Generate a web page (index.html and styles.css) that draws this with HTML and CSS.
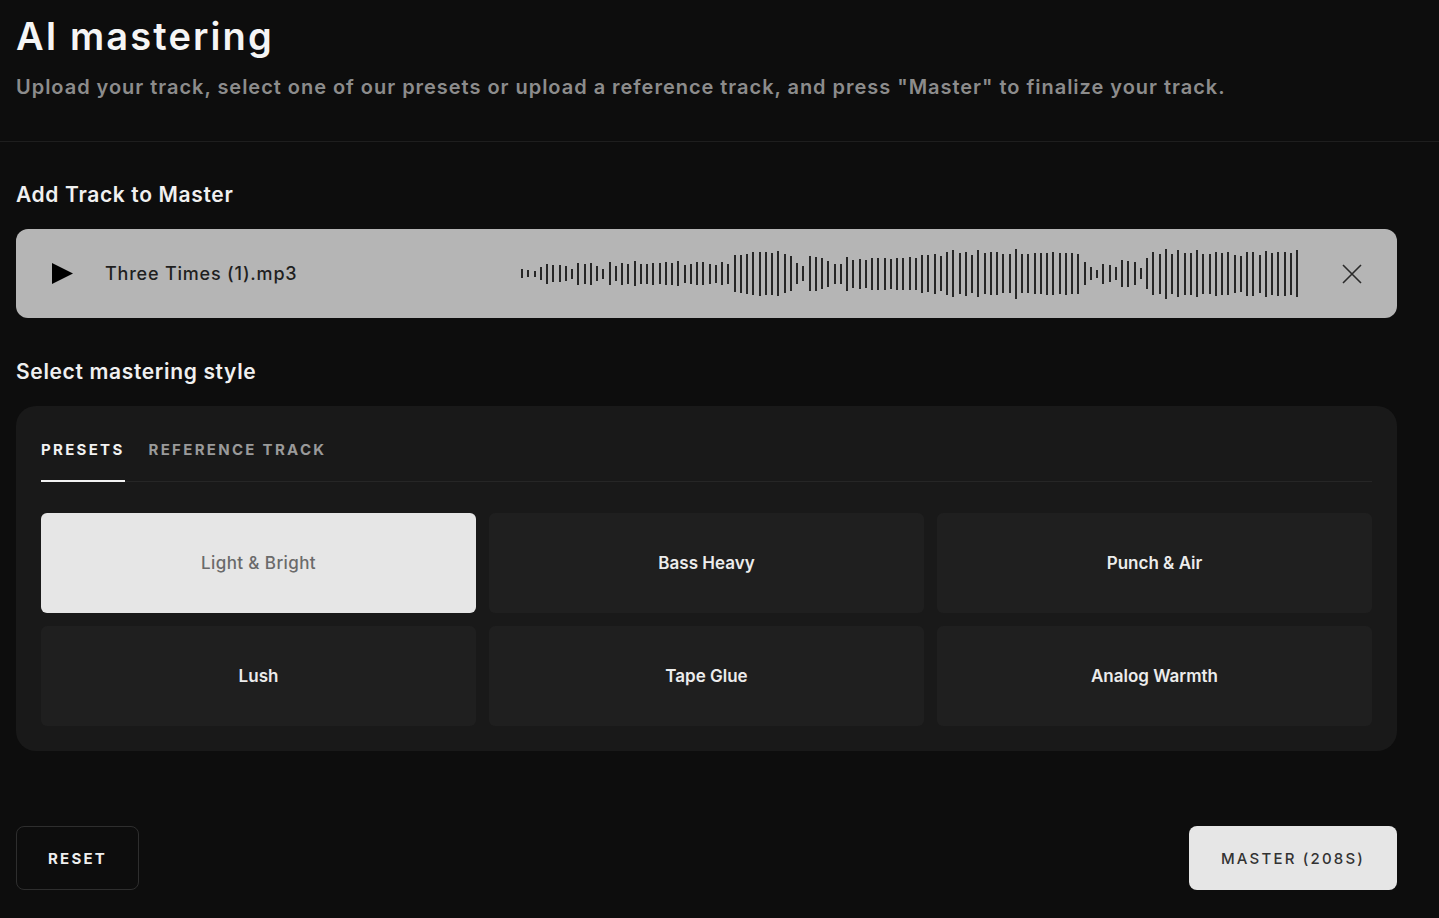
FILE: index.html
```html
<!DOCTYPE html>
<html lang="en">
<head>
<meta charset="utf-8">
<title>AI mastering</title>
<link rel="stylesheet" href="styles.css">
</head>
<body>
<header class="header">
  <h1 class="title">AI mastering</h1>
  <p class="subtitle">Upload your track, select one of our presets or upload a reference track, and press "Master" to finalize your track.</p>
</header>
<main class="main">
  <h2 class="section-title first">Add Track to Master</h2>
  <div class="track">
    <button class="play" aria-label="Play">
      <svg width="22" height="22" viewBox="0 0 22 22"><path d="M0 0 L21 10.5 L0 21 Z" fill="#000"/></svg>
    </button>
    <div class="filename">Three Times (1).mp3</div>
    <div class="wave">
      <span style="height:9px"></span><span style="height:7px"></span><span style="height:6px"></span><span style="height:13px"></span><span style="height:20px"></span><span style="height:17px"></span><span style="height:17px"></span><span style="height:15px"></span><span style="height:10px"></span><span style="height:22px"></span><span style="height:20px"></span><span style="height:22px"></span><span style="height:15px"></span><span style="height:10px"></span><span style="height:23px"></span><span style="height:15px"></span><span style="height:22px"></span><span style="height:20px"></span><span style="height:25px"></span><span style="height:20px"></span><span style="height:20px"></span><span style="height:22px"></span><span style="height:21px"></span><span style="height:23px"></span><span style="height:22px"></span><span style="height:25px"></span><span style="height:18px"></span><span style="height:20px"></span><span style="height:23px"></span><span style="height:23px"></span><span style="height:20px"></span><span style="height:18px"></span><span style="height:23px"></span><span style="height:20px"></span>
      <span style="height:37px"></span><span style="height:38px"></span><span style="height:40px"></span><span style="height:43px"></span><span style="height:44px"></span><span style="height:43px"></span><span style="height:42px"></span><span style="height:45px"></span><span style="height:39px"></span><span style="height:35px"></span><span style="height:21px"></span><span style="height:15px"></span><span style="height:35px"></span><span style="height:34px"></span><span style="height:31px"></span><span style="height:26px"></span>
      <span style="height:20px"></span><span style="height:20px"></span><span style="height:34px"></span><span style="height:28px"></span><span style="height:30px"></span><span style="height:28px"></span><span style="height:32px"></span><span style="height:32px"></span><span style="height:32px"></span><span style="height:30px"></span><span style="height:32px"></span><span style="height:32px"></span>
      <span style="height:33px"></span><span style="height:32px"></span><span style="height:38px"></span><span style="height:37px"></span><span style="height:40px"></span><span style="height:35px"></span><span style="height:43px"></span><span style="height:47px"></span><span style="height:41px"></span><span style="height:44px"></span><span style="height:38px"></span><span style="height:47px"></span><span style="height:41px"></span><span style="height:43px"></span><span style="height:43px"></span><span style="height:39px"></span><span style="height:39px"></span><span style="height:50px"></span><span style="height:39px"></span><span style="height:39px"></span><span style="height:41px"></span><span style="height:41px"></span><span style="height:42px"></span><span style="height:43px"></span><span style="height:41px"></span><span style="height:42px"></span><span style="height:41px"></span><span style="height:40px"></span><span style="height:23px"></span><span style="height:13px"></span><span style="height:8px"></span>
      <span style="height:20px"></span><span style="height:17px"></span><span style="height:13px"></span><span style="height:27px"></span><span style="height:26px"></span><span style="height:23px"></span><span style="height:11px"></span><span style="height:31px"></span><span style="height:43px"></span><span style="height:40px"></span><span style="height:50px"></span><span style="height:40px"></span><span style="height:47px"></span><span style="height:42px"></span><span style="height:42px"></span><span style="height:47px"></span><span style="height:40px"></span><span style="height:40px"></span><span style="height:44px"></span><span style="height:42px"></span><span style="height:43px"></span><span style="height:38px"></span><span style="height:36px"></span><span style="height:44px"></span><span style="height:44px"></span><span style="height:38px"></span><span style="height:46px"></span><span style="height:42px"></span><span style="height:44px"></span><span style="height:44px"></span><span style="height:42px"></span><span style="height:47px"></span>
    </div>
    <button class="close" aria-label="Remove">
      <svg width="20" height="20" viewBox="0 0 20 20"><path d="M1 1 L19 19 M19 1 L1 19" stroke="#2a2a2a" stroke-width="1.6" fill="none"/></svg>
    </button>
  </div>

  <h2 class="section-title second">Select mastering style</h2>
  <section class="panel">
    <div class="tabs">
      <div class="tab active">PRESETS</div>
      <div class="tab">REFERENCE TRACK</div>
    </div>
    <div class="grid">
      <button class="preset selected">Light &amp; Bright</button>
      <button class="preset">Bass Heavy</button>
      <button class="preset">Punch &amp; Air</button>
      <button class="preset">Lush</button>
      <button class="preset">Tape Glue</button>
      <button class="preset">Analog Warmth</button>
    </div>
  </section>

  <div class="actions">
    <button class="btn reset">RESET</button>
    <button class="btn master">MASTER (208S)</button>
  </div>
</main>
</body>
</html>
```
FILE: styles.css
```css
* { box-sizing: border-box; }
html, body { margin: 0; padding: 0; }
body {
  background: #0d0d0d;
  color: #f2f2f2;
  font-family: Inter, "Noto Sans", "Liberation Sans", sans-serif;
  width: 1439px;
  height: 918px;
  overflow: hidden;
}
button { font-family: inherit; border: none; background: none; padding: 0; cursor: pointer; }

.header {
  padding: 14px 16px 40px;
  border-bottom: 1px solid #1e1e1e;
}
.title {
  margin: 0;
  font-size: 38px;
  line-height: 44px;
  font-weight: 600;
  letter-spacing: 2.1px;
  color: #f5f5f5;
}
.subtitle {
  margin: 15px 0 0;
  font-size: 20px;
  line-height: 28px;
  font-weight: 600;
  letter-spacing: 0.97px;
  color: #8c8c8c;
}

.main {
  padding: 0 42px 0 16px;
}
.section-title {
  margin: 0;
  font-size: 21px;
  line-height: 28px;
  font-weight: 600;
  letter-spacing: 0.65px;
  color: #f0f0f0;
}
.section-title.first { margin-top: 39px; }
.section-title.second { margin-top: 40px; }

.track {
  margin-top: 20px;
  height: 89px;
  background: #b5b5b5;
  border-radius: 12px;
  display: flex;
  align-items: center;
}
.play {
  margin-left: 36px;
  width: 22px;
  height: 22px;
  display: flex;
}
.filename {
  margin-left: 31px;
  width: 416px;
  font-size: 18px;
  font-weight: 500;
  letter-spacing: 0.8px;
  color: #1f1f1f;
}
.wave {
  width: 778px;
  height: 52px;
  display: flex;
  align-items: center;
  justify-content: space-between;
}
.wave span {
  width: 2px;
  background: #262626;
  display: block;
}
.close {
  margin-left: 43px;
  width: 20px;
  height: 20px;
  display: flex;
}

.panel {
  margin-top: 20px;
  background: #191919;
  border-radius: 20px;
  padding: 24px 25px 25px;
}
.tabs {
  display: flex;
  gap: 24px;
  border-bottom: 1px solid #262626;
}
.tab {
  padding: 10px 0 20px;
  font-size: 15px;
  line-height: 20px;
  font-weight: 700;
  letter-spacing: 2.3px;
  color: #9a9a9a;
  margin-bottom: -1px;
  border-bottom: 2px solid transparent;
}
.tab.active {
  color: #f2f2f2;
  border-bottom-color: #f2f2f2;
}
.grid {
  margin-top: 31px;
  display: grid;
  grid-template-columns: repeat(3, 1fr);
  gap: 13px;
}
.preset {
  height: 100px;
  border-radius: 6px;
  background: #1f1f1f;
  color: #ececec;
  font-size: 17px;
  font-weight: 600;
}
.preset.selected {
  background: #e6e6e6;
  color: #6a6a6a;
  font-weight: 500;
  letter-spacing: 0.4px;
}

.actions {
  margin-top: 75px;
  display: flex;
  justify-content: space-between;
}
.btn {
  height: 64px;
  border-radius: 8px;
  font-size: 15px;
  letter-spacing: 2.2px;
}
.reset {
  width: 123px;
  border: 1px solid #2e2e2e;
  color: #efefef;
  font-weight: 700;
}
.master {
  width: 208px;
  background: #e6e6e6;
  color: #333;
  font-weight: 500;
}
```
